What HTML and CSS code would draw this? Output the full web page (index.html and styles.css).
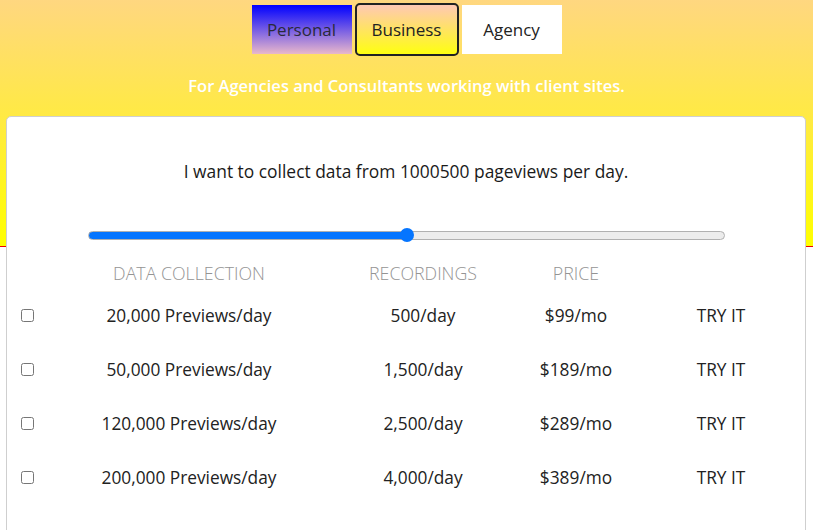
FILE: index.html
```html
<!DOCTYPE html>
<html>
<head>
<meta charset="utf-8">
<link rel="stylesheet" href="styles.css">
</head>
<body>
<div class="page">
  <header class="hero">
    <div class="tabs">
      <button class="tab tab-personal">Personal</button>
      <button class="tab tab-business">Business</button>
      <button class="tab tab-agency">Agency</button>
    </div>
    <p class="tagline">For Agencies and Consultants working with client sites.</p>
  </header>
  <main class="card">
    <p class="lead">I want to collect data from 1000500 pageviews per day.</p>
    <div class="slider-wrap">
      <input class="slider" type="range" min="1000" max="2000000" value="1000500">
    </div>
    <div class="plans">
      <div class="row head">
        <span></span>
        <span>DATA COLLECTION</span>
        <span>RECORDINGS</span>
        <span>PRICE</span>
        <span></span>
      </div>
      <div class="row">
        <span class="chk"><input type="checkbox"></span>
        <span>20,000 Previews/day</span>
        <span>500/day</span>
        <span>$99/mo</span>
        <span>TRY IT</span>
      </div>
      <div class="row">
        <span class="chk"><input type="checkbox"></span>
        <span>50,000 Previews/day</span>
        <span>1,500/day</span>
        <span>$189/mo</span>
        <span>TRY IT</span>
      </div>
      <div class="row">
        <span class="chk"><input type="checkbox"></span>
        <span>120,000 Previews/day</span>
        <span>2,500/day</span>
        <span>$289/mo</span>
        <span>TRY IT</span>
      </div>
      <div class="row">
        <span class="chk"><input type="checkbox"></span>
        <span>200,000 Previews/day</span>
        <span>4,000/day</span>
        <span>$389/mo</span>
        <span>TRY IT</span>
      </div>
    </div>
  </main>
</div>
</body>
</html>
```

FILE: styles.css
```css
html, body {
  margin: 0;
  padding: 0;
}
body {
  font-family: "Open Sans", "DejaVu Sans", sans-serif;
  background: #fff;
  overflow: hidden;
}
.page {
  min-height: 530px;
  background: linear-gradient(to bottom, #ffd780 0px, #ffff00 246px, #ee0000 246px, #ee0000 247px, #ffffff 247px);
  padding-top: 5px;
}
.hero {
  text-align: center;
}
.tabs {
  display: flex;
  justify-content: center;
  gap: 5px;
}
.tab {
  width: 100px;
  height: 49px;
  border: 0;
  margin: 0;
  padding: 0;
  font-family: "Open Sans", sans-serif;
  font-size: 17px;
  color: #222;
  cursor: pointer;
}
.tab-personal {
  background: linear-gradient(to bottom, #0000ff, #e9b8cb);
  color: #2a2a3a;
}
.tab-business {
  background: linear-gradient(to bottom, #ffc8b4, #ffff10);
  outline: 2px solid #222;
  outline-offset: 0;
  border-radius: 3px;
}
.tab-agency {
  background: #fff;
}
.tagline {
  margin: 20px 0 0;
  color: #fff;
  font-size: 16.5px;
  font-weight: 600;
  line-height: 24px;
}
.card {
  margin: 18px 7px 0 6px;
  background: #fff;
  border: 1px solid #cfcfcf;
  border-radius: 5px;
  padding-top: 42px;
  min-height: 430px;
}
.lead {
  margin: 0;
  text-align: center;
  font-size: 17.4px;
  line-height: 24px;
  color: #1a1a1a;
}
.slider-wrap {
  padding: 45px 80px 0 81px;
}
.slider {
  -webkit-appearance: none;
  appearance: none;
  display: block;
  width: 100%;
  margin: 0;
  height: 14px;
  background: transparent;
}
.slider::-webkit-slider-runnable-track {
  height: 9px;
  border-radius: 5px;
  box-sizing: border-box;
  border: 1px solid #b0b0b0;
  background: linear-gradient(to right, #0575ff 0%, #0575ff 50%, #ececec 50%, #ececec 100%);
}
.slider::-webkit-slider-thumb {
  -webkit-appearance: none;
  appearance: none;
  width: 14px;
  height: 14px;
  border-radius: 50%;
  background: #0575ff;
  margin-top: -3.5px;
  border: 0;
}
.plans {
  margin-top: 16px;
}
.row {
  display: grid;
  grid-template-columns: 40px 284px 184px 122px 1fr;
  align-items: center;
  height: 54px;
  font-size: 17.3px;
  color: #222;
}
.row > span {
  text-align: center;
}
.row.head {
  height: 30px;
  font-size: 17.8px;
  color: #949494;
  font-weight: 300;
}
.chk {
  display: flex;
  justify-content: center;
}
.chk input {
  margin: 0;
  width: 13px;
  height: 13px;
}
```
